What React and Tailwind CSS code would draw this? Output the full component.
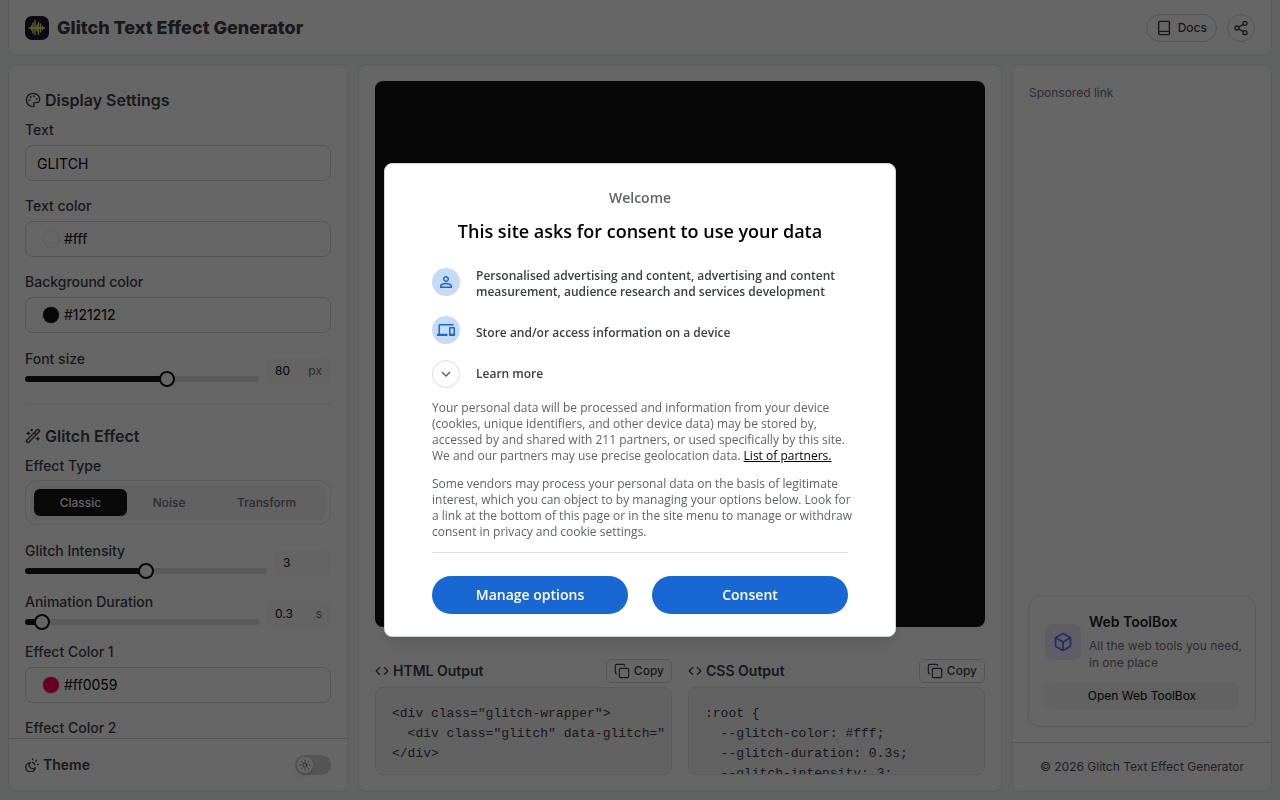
import { useState } from "react";
import { Book, Box, Code, Copy, Palette, Share2, Sun, WandSparkles } from "lucide-react";
import { MdDevices, MdExpandMore, MdPersonOutline } from "react-icons/md";

const htmlCode = `<div class="glitch-wrapper">
  <div class="glitch" data-glitch="GLITCH">GLITCH</div>
</div>`;

const cssCode = `:root {
  --glitch-color: #fff;
  --glitch-duration: 0.3s;
  --glitch-intensity: 3;
}`;

const effectTypes = ["Classic", "Noise", "Transform"];

function Logo() {
  return (
    <svg viewBox="0 0 24 24" className="size-6" aria-hidden="true">
      <defs>
        <linearGradient id="logo-bg" x1="0" y1="0" x2="1" y2="1">
          <stop offset="0" stopColor="#18181b" />
          <stop offset="1" stopColor="#1e1b4b" />
        </linearGradient>
      </defs>
      <rect width="24" height="24" rx="7" fill="url(#logo-bg)" />
      <path
        d="M4 12h15.5M6.5 10v4M8 7v10M10 4.5v14M12 9v6M13.5 6.5v12M15.5 8v8M17.5 10.5v3"
        stroke="#eef07a"
        strokeWidth="1.3"
        strokeLinecap="round"
        fill="none"
      />
    </svg>
  );
}

function ThemeIcon() {
  return (
    <svg
      viewBox="0 0 24 24"
      className="size-3.5"
      fill="none"
      stroke="currentColor"
      strokeWidth="2.4"
      strokeLinecap="round"
      strokeLinejoin="round"
      aria-hidden="true"
    >
      <path d="M9 8a6 6 0 0 0 8.5 8.5A8 8 0 1 1 9 8Z" />
      <path d="M13 1.5v1M19.5 4l-1 1M22.5 11h-1M13 7.5a4 4 0 0 1 3.5 4" />
    </svg>
  );
}

function SectionTitle({ icon: Icon, children }) {
  return (
    <h2 className="mb-2 flex items-center gap-1 text-base font-semibold text-zinc-700">
      <Icon className="size-4" />
      {children}
    </h2>
  );
}

function ColorField({ id, label, value }) {
  return (
    <div className="flex flex-col gap-[5px]">
      <label htmlFor={id} className="text-sm font-medium text-zinc-700">
        {label}
      </label>
      <div className="flex h-9 items-center gap-[5px] rounded-lg border border-zinc-300 pl-[17px]">
        <span
          className="size-4 rounded-full ring-1 ring-zinc-200"
          style={{ backgroundColor: value }}
        />
        <input
          id={id}
          defaultValue={value}
          className="min-w-0 flex-1 bg-transparent text-sm text-zinc-950 outline-none"
        />
      </div>
    </div>
  );
}

function SliderField({ id, label, min, max, step, initial, unit }) {
  const [value, setValue] = useState(initial);
  const ratio = (value - min) / (max - min);
  const stop = `calc(8px + (100% - 16px) * ${ratio})`;

  return (
    <div className="flex h-9 items-end gap-[7px]">
      <div className="flex min-w-0 flex-1 flex-col gap-[5px]">
        <label htmlFor={id} className="text-sm font-medium text-zinc-700">
          {label}
        </label>
        <div className="flex h-2.5 items-center">
          <input
            id={id}
            type="range"
            min={min}
            max={max}
            step={step}
            value={value}
            onChange={(e) => setValue(Number(e.target.value))}
            className="h-1.5 w-full appearance-none rounded-full [&::-webkit-slider-thumb]:size-4 [&::-webkit-slider-thumb]:appearance-none [&::-webkit-slider-thumb]:rounded-full [&::-webkit-slider-thumb]:border-2 [&::-webkit-slider-thumb]:border-zinc-900 [&::-webkit-slider-thumb]:bg-white"
            style={{
              background: `linear-gradient(to right, #18181b ${stop}, #e0e0e2 ${stop})`,
            }}
          />
        </div>
      </div>
      <div
        className={`flex h-[26px] items-center rounded-lg bg-[#f9f9fa] px-[9px] text-xs ${
          unit ? "w-[65px]" : "w-[57px]"
        }`}
      >
        <input
          aria-label={`${label} value`}
          value={value}
          onChange={(e) => setValue(Number(e.target.value) || min)}
          className="w-0 min-w-0 flex-1 bg-transparent text-xs text-zinc-950 outline-none"
        />
        {unit && <span className="text-zinc-500">{unit}</span>}
      </div>
    </div>
  );
}

function OutputBlock({ title, code }) {
  return (
    <section className="flex min-w-0 flex-col gap-1">
      <div className="flex h-6 items-center justify-between">
        <h3 className="flex items-center gap-1 text-sm font-semibold text-zinc-700">
          <Code className="size-3.5" />
          {title}
        </h3>
        <button
          type="button"
          className="flex h-6 items-center gap-1 rounded-md border border-zinc-300 px-[7px] text-xs font-medium text-zinc-700"
        >
          <Copy className="size-4" strokeWidth={1.75} />
          Copy
        </button>
      </div>
      <pre className="h-[88px] overflow-hidden rounded-lg border border-zinc-200 bg-zinc-100 pt-4 pr-1.5 pl-4 text-[13px] leading-5 text-zinc-700">
        <code className="block overflow-hidden font-['Liberation_Mono',monospace]">{code}</code>
      </pre>
    </section>
  );
}

function SettingsPanel() {
  const [effect, setEffect] = useState("Classic");
  const [dark, setDark] = useState(false);

  return (
    <aside className="flex w-[340px] shrink-0 flex-col rounded-lg border border-zinc-200 bg-white">
      <div className="min-h-0 flex-1 overflow-hidden px-4 pt-[23px]">
        <SectionTitle icon={Palette}>Display Settings</SectionTitle>
        <div className="flex flex-col gap-[15px]">
          <div className="flex flex-col gap-[5px]">
            <label htmlFor="text" className="text-sm font-medium text-zinc-700">
              Text
            </label>
            <input
              id="text"
              defaultValue="GLITCH"
              className="h-9 rounded-lg border border-zinc-300 px-[11px] text-sm text-zinc-950 outline-none"
            />
          </div>
          <ColorField id="text-color" label="Text color" value="#fff" />
          <ColorField id="bg-color" label="Background color" value="#121212" />
          <SliderField
            id="font-size"
            label="Font size"
            min={16}
            max={120}
            step={1}
            initial={80}
            unit="px"
          />
        </div>

        <hr className="my-5 mb-[19px] border-zinc-200" />

        <SectionTitle icon={WandSparkles}>Glitch Effect</SectionTitle>
        <div className="flex flex-col gap-[15px]">
          <div className="flex flex-col gap-1">
            <span className="text-sm font-medium text-zinc-700">Effect Type</span>
            <div className="flex h-[45px] rounded-xl border border-zinc-200 p-1">
              <div
                role="tablist"
                aria-label="Effect Type"
                className="flex flex-1 rounded-lg bg-zinc-100 p-1"
              >
                {effectTypes.map((item) => (
                  <button
                    key={item}
                    type="button"
                    role="tab"
                    aria-selected={effect === item}
                    onClick={() => setEffect(item)}
                    className={`flex-auto rounded-md px-4 text-xs font-medium ${
                      effect === item ? "bg-zinc-900 text-zinc-50" : "text-zinc-500"
                    }`}
                  >
                    {item}
                  </button>
                ))}
              </div>
            </div>
          </div>
          <SliderField
            id="intensity"
            label="Glitch Intensity"
            min={1}
            max={5}
            step={1}
            initial={3}
          />
          <SliderField
            id="duration"
            label="Animation Duration"
            min={0.1}
            max={5}
            step={0.1}
            initial={0.3}
            unit="s"
          />
          <ColorField id="color-1" label="Effect Color 1" value="#ff0059" />
          <ColorField id="color-2" label="Effect Color 2" value="#00c3ff" />
        </div>
      </div>

      <div className="flex h-[53px] shrink-0 items-center justify-between border-t border-zinc-300 px-4">
        <span className="flex items-center gap-1 text-sm font-semibold text-zinc-700">
          <ThemeIcon />
          Theme
        </span>
        <button
          type="button"
          role="switch"
          aria-checked={dark}
          aria-label="Theme"
          onClick={() => setDark(!dark)}
          className={`flex h-5 w-9 items-center rounded-full bg-zinc-300 p-0.5 ${
            dark ? "justify-end" : ""
          }`}
        >
          <span className="flex size-4 items-center justify-center rounded-full bg-white text-zinc-500 shadow-md">
            <Sun className="size-3" />
          </span>
        </button>
      </div>
    </aside>
  );
}

function SponsorPanel() {
  return (
    <aside className="flex w-[260px] shrink-0 flex-col rounded-lg border border-zinc-200 bg-white">
      <div className="flex flex-1 flex-col justify-between px-[15px] pt-5 pb-[15px]">
        <p className="px-px text-xs text-zinc-500">Sponsored link</p>
        <div className="rounded-xl border border-zinc-200 p-4 shadow-xs">
          <div className="flex items-center gap-2">
            <div className="flex size-9 shrink-0 items-center justify-center rounded-lg bg-violet-100 text-indigo-500">
              <Box className="size-5" />
            </div>
            <div>
              <h3 className="text-sm leading-[18px] font-semibold text-zinc-800">Web ToolBox</h3>
              <p className="mt-1.5 text-xs leading-[17px] whitespace-nowrap text-zinc-500">
                All the web tools you need,
                <br />
                in one place
              </p>
            </div>
          </div>
          <a
            href="#toolbox"
            className="mt-[11px] flex h-7 items-center justify-center rounded-lg bg-zinc-100 text-xs text-zinc-950"
          >
            Open Web ToolBox
          </a>
        </div>
      </div>
      <footer className="flex h-[49px] items-center justify-center border-t border-zinc-300 text-xs text-zinc-600">
        © 2026 Glitch Text Effect Generator
      </footer>
    </aside>
  );
}

function ConsentDialog() {
  return (
    <div className="fixed inset-0 z-10 flex items-center justify-center bg-black/60 font-['Open_Sans',sans-serif]">
      <div
        role="dialog"
        aria-modal="true"
        aria-labelledby="consent-title"
        className="w-[512px] rounded-lg border border-gray-300 bg-white px-[47px] pt-6 pb-[22px] text-xs leading-4 text-[#5f6368] shadow-lg"
      >
        <p className="text-center text-sm leading-5 font-semibold">Welcome</p>
        <h1
          id="consent-title"
          className="mt-[11px] mb-[25px] text-center text-lg leading-6 font-semibold text-black"
        >
          This site asks for consent to use your data
        </h1>

        <ul className="flex flex-col gap-4 font-semibold text-[#3c4043]">
          <li className="flex items-start gap-4">
            <span className="flex size-7 shrink-0 items-center justify-center rounded-full bg-[#c6daf5] text-[#1967d2]">
              <MdPersonOutline className="size-[18px]" />
            </span>
            <span>
              Personalised advertising and content, advertising and content measurement, audience
              research and services development
            </span>
          </li>
          <li className="flex items-start gap-4">
            <span className="flex size-7 shrink-0 items-center justify-center rounded-full bg-[#c6daf5] text-[#1967d2]">
              <MdDevices className="size-[18px]" />
            </span>
            <span className="pt-[9px]">Store and/or access information on a device</span>
          </li>
          <li>
            <button type="button" className="flex items-center gap-4">
              <span className="flex size-7 items-center justify-center rounded-full border border-[#dadce0] text-[#5f6368]">
                <MdExpandMore className="size-[18px]" />
              </span>
              Learn more
            </button>
          </li>
        </ul>

        <div className="-mr-1 mt-3 flex flex-col gap-3">
          <p>
            Your personal data will be processed and information from your device (cookies, unique
            identifiers, and other device data) may be stored by, accessed by and shared with 211
            partners, or used specifically by this site. We and our partners may use precise
            geolocation data.{" "}
            <a href="#partners" className="text-black underline">
              List of partners.
            </a>
          </p>
          <p>
            Some vendors may process your personal data on the basis of legitimate interest, which
            you can object to by managing your options below. Look for a link at the bottom of this
            page or in the site menu to manage or withdraw consent in privacy and cookie settings.
          </p>
        </div>

        <hr className="mt-3 mb-[23px] border-[#dadce0]" />

        <div className="grid grid-cols-2 gap-6 text-sm font-semibold text-white">
          <button type="button" className="h-[38px] rounded-full bg-[#1967d2]">
            Manage options
          </button>
          <button type="button" className="h-[38px] rounded-full bg-[#1967d2]">
            Consent
          </button>
        </div>
      </div>
    </div>
  );
}

export default function App() {
  return (
    <div className="flex h-screen flex-col gap-2 overflow-hidden bg-[#f1f8f5] px-2 pb-2 font-['Inter',sans-serif]">
      <header className="flex h-14 shrink-0 items-center justify-between rounded-b-lg border border-t-0 border-zinc-200 bg-white px-4">
        <div className="flex items-center gap-2">
          <Logo />
          <span className="text-lg font-extrabold text-zinc-700">Glitch Text Effect Generator</span>
        </div>
        <div className="flex items-center gap-2.5">
          <a
            href="#docs"
            className="flex h-7 items-center gap-1.5 rounded-full border border-zinc-300 px-[9px] text-xs font-medium text-zinc-700"
          >
            <Book className="size-4" />
            Docs
          </a>
          <button
            type="button"
            aria-label="Share"
            className="flex size-7 items-center justify-center rounded-full border border-zinc-300 text-zinc-700"
          >
            <Share2 className="size-4" />
          </button>
        </div>
      </header>

      <div className="flex min-h-0 flex-1 gap-2.5">
        <SettingsPanel />
        <main className="flex min-w-0 flex-1 flex-col gap-8 rounded-lg border border-zinc-200 bg-white p-4">
          <div className="flex-1 rounded-lg bg-[#121212]" />
          <div className="grid grid-cols-2 gap-4">
            <OutputBlock title="HTML Output" code={htmlCode} />
            <OutputBlock title="CSS Output" code={cssCode} />
          </div>
        </main>
        <SponsorPanel />
      </div>

      <ConsentDialog />
    </div>
  );
}
